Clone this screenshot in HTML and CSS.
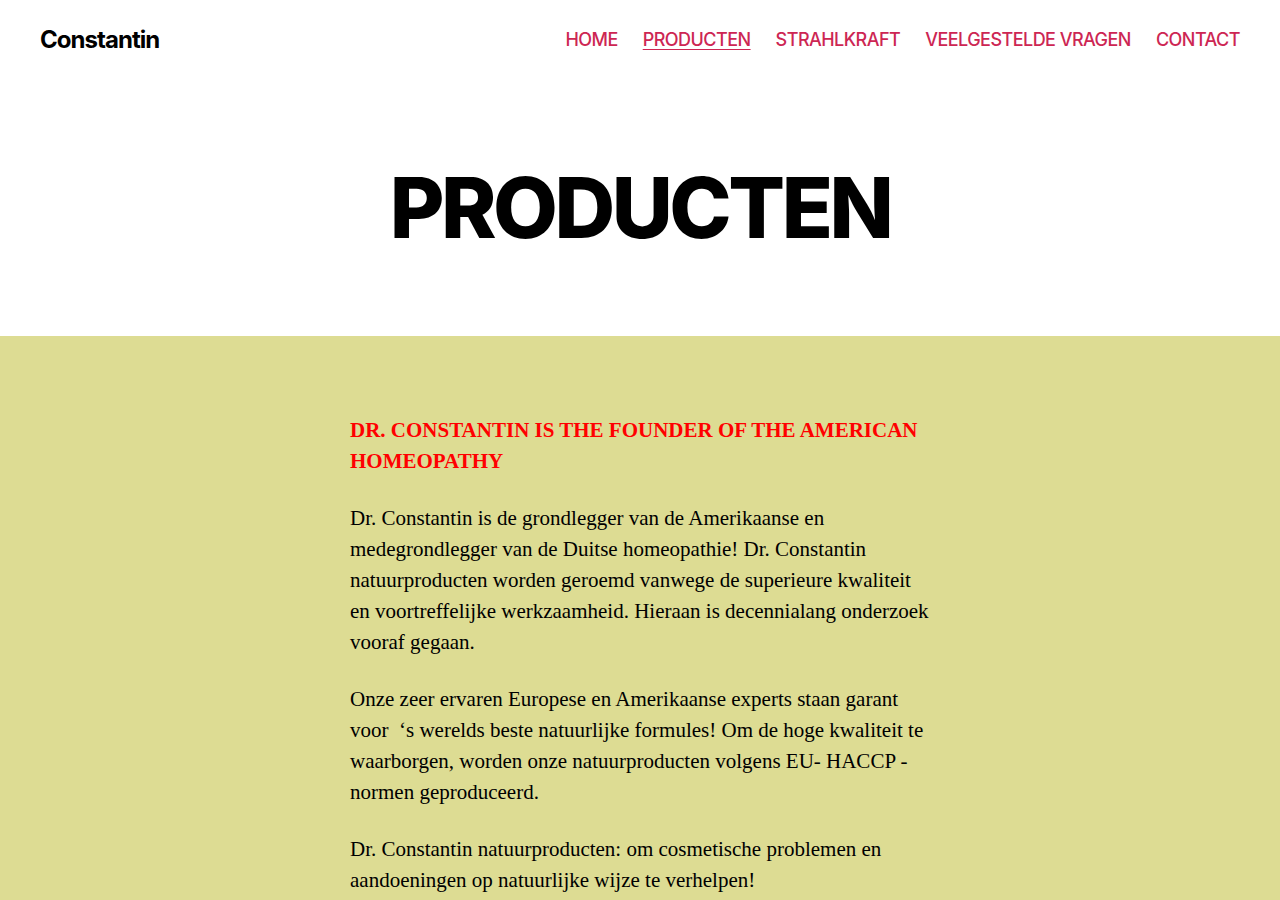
FILE: index.html
```html
<!DOCTYPE html>
<html lang="nl">
<head>
<meta charset="utf-8">
<title>Producten – Constantin</title>
<link rel="stylesheet" href="styles.css">
</head>
<body>
<header class="site-header">
  <div class="site-title"><a href="#">Constantin</a></div>
  <nav class="primary-menu">
    <a href="#">HOME</a>
    <a href="#" class="current">PRODUCTEN</a>
    <a href="#">STRAHLKRAFT</a>
    <a href="#">VEELGESTELDE VRAGEN</a>
    <a href="#">CONTACT</a>
  </nav>
</header>
<main>
  <div class="entry-header">
    <h1 class="entry-title">PRODUCTEN</h1>
  </div>
  <div class="post-inner">
    <div class="entry-content">
      <h4 class="lead">DR. CONSTANTIN IS THE FOUNDER OF THE AMERICAN HOMEOPATHY</h4>
      <p>Dr. Constantin is de grondlegger van de Amerikaanse en medegrondlegger van de Duitse homeopathie! Dr. Constantin natuurproducten worden geroemd vanwege de superieure kwaliteit en voortreffelijke werkzaamheid. Hieraan is decennialang onderzoek vooraf gegaan.</p>
      <p>Onze zeer ervaren Europese en Amerikaanse experts staan garant voor&nbsp; ‘s werelds beste natuurlijke formules! Om de hoge kwaliteit te waarborgen, worden onze natuurproducten volgens EU- HACCP -normen geproduceerd.</p>
      <p>Dr. Constantin natuurproducten: om cosmetische problemen en aandoeningen op natuurlijke wijze te verhelpen!</p>
    </div>
  </div>
</main>
</body>
</html>
```
FILE: styles.css
```css
html, body {
  margin: 0;
  padding: 0;
}
body {
  background: #fff;
  color: #000;
  font-family: Inter, "Noto Sans", sans-serif;
}
a {
  color: inherit;
  text-decoration: none;
}
.site-header {
  height: 80px;
  padding: 0 40px;
  display: flex;
  align-items: center;
  justify-content: space-between;
  box-sizing: border-box;
}
.site-title {
  font-size: 24px;
  font-weight: 700;
  letter-spacing: -0.04em;
  line-height: 1;
  color: #000;
}
.primary-menu {
  display: flex;
  gap: 25px;
  font-size: 18px;
  font-weight: 500;
  letter-spacing: -0.03em;
  line-height: 1.15;
  color: #cd2653;
}
.primary-menu a.current {
  text-decoration: underline;
  text-underline-offset: 3px;
  text-decoration-thickness: 1px;
}
.entry-header {
  padding: 80px 0;
  text-align: center;
}
.entry-title {
  margin: 0;
  font-size: 84px;
  font-weight: 800;
  letter-spacing: -0.0415625em;
  line-height: 1.138;
}
.post-inner {
  background: #dddc93;
  padding-top: 79px;
  min-height: 600px;
}
.entry-content {
  width: 580px;
  margin: 0 auto;
  font-family: "Liberation Serif", "Times New Roman", serif;
  font-size: 21px;
  line-height: 1.476;
  color: #000;
}
.entry-content .lead {
  margin: 0 0 1.25em;
  font-size: 21px;
  font-weight: 700;
  line-height: 1.476;
  color: #ff0000;
}
.entry-content p {
  margin: 0 0 1.25em;
}
```
